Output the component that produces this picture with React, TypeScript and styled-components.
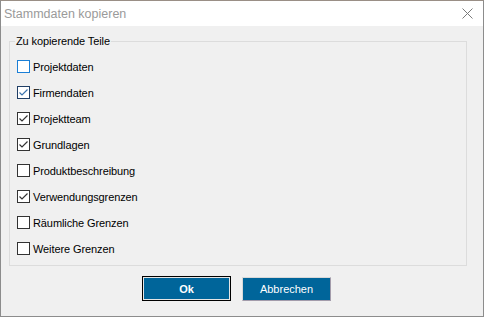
import styled, { createGlobalStyle } from "styled-components"

const GlobalStyle = createGlobalStyle`
  html, body {
    margin: 0;
    padding: 0;
    background: #f0f0f0;
  }
  body {
    font-family: "Liberation Sans", Arial, sans-serif;
  }
`

const Window = styled.div`
  width: 484px;
  height: 317px;
  box-sizing: border-box;
  display: flex;
  flex-direction: column;
  border: 1px solid #8c8c8c;
  border-top-color: #9a8f86;
  background: #f0f0f0;
`

const TitleBar = styled.div`
  height: 25px;
  display: flex;
  align-items: center;
  justify-content: space-between;
  padding: 0 10px 0 3px;
  background: #ffffff;
`

const Title = styled.span`
  font-size: 12.5px;
  color: #9a9a9a;
  margin-top: 1px;
`

const CloseIcon = () => (
  <svg width="11" height="11" viewBox="0 0 11 11" style={{ marginTop: -1 }}>
    <path d="M0.5 0.5L10.5 10.5M10.5 0.5L0.5 10.5" stroke="#7a7a7a" strokeWidth="1" fill="none" />
  </svg>
)

const Body = styled.div`
  flex: 1;
  display: flex;
  flex-direction: column;
  padding: 8px 16px 0 8px;
`

const Group = styled.fieldset`
  margin: 0;
  padding: 12px 7px 8px 7px;
  border: 1px solid #dcdcdc;
  height: 232px;
  box-sizing: border-box;
  min-width: 0;
`

const Legend = styled.legend`
  font-size: 11px;
  letter-spacing: -0.1px;
  color: #000;
  padding: 0 1px;
  margin-left: -2px;
  line-height: 14px;
`

const List = styled.div`
  display: flex;
  flex-direction: column;
  gap: 13px;
`

const Row = styled.label`
  display: flex;
  align-items: center;
  height: 13px;
  gap: 3px;
  font-size: 11px;
  letter-spacing: -0.1px;
  color: #000;
`

const Box = styled.span<{ $border: string }>`
  width: 13px;
  height: 13px;
  box-sizing: border-box;
  border: 1px solid ${(p) => p.$border};
  background: #fff;
  display: flex;
  align-items: center;
  justify-content: center;
`

const Check = ({ color }: { color: string }) => (
  <svg width="11" height="11" viewBox="0 0 11 11">
    <path d="M1.5 5.5L4 8L9.5 2.5" stroke={color} strokeWidth="1.2" fill="none" />
  </svg>
)

const Buttons = styled.div`
  display: flex;
  gap: 11px;
  padding: 10px 0 0 133px;
  align-items: flex-start;
`

const Button = styled.button<{ $primary?: boolean }>`
  font-family: "Liberation Sans", Arial, sans-serif;
  font-size: 11px;
  font-weight: ${(p) => (p.$primary ? 700 : 400)};
  color: #fff;
  background: #00659a;
  width: 89px;
  height: ${(p) => (p.$primary ? "25px" : "24px")};
  margin-top: ${(p) => (p.$primary ? "0" : "1px")};
  padding: 0;
  border: 1px solid ${(p) => (p.$primary ? "#000" : "#d8d8d8")};
  border-right-color: ${(p) => (p.$primary ? "#000" : "#a39cab")};
  border-bottom-color: ${(p) => (p.$primary ? "#000" : "#a39cab")};
  box-shadow: ${(p) => (p.$primary ? "inset 0 0 0 1px #e6e6e6" : "none")};
`

const items = [
  { label: "Projektdaten", checked: false, border: "#1a7fd6", check: "" },
  { label: "Firmendaten", checked: true, border: "#203f66", check: "#3b73ad" },
  { label: "Projektteam", checked: true, border: "#333", check: "#333" },
  { label: "Grundlagen", checked: true, border: "#333", check: "#333" },
  { label: "Produktbeschreibung", checked: false, border: "#333", check: "" },
  { label: "Verwendungsgrenzen", checked: true, border: "#333", check: "#333" },
  { label: "Räumliche Grenzen", checked: false, border: "#333", check: "" },
  { label: "Weitere Grenzen", checked: false, border: "#333", check: "" },
]

export default function App() {
  return (
    <>
      <GlobalStyle />
      <Window>
        <TitleBar>
          <Title>Stammdaten kopieren</Title>
          <CloseIcon />
        </TitleBar>
        <Body>
          <Group>
            <Legend>Zu kopierende Teile</Legend>
            <List>
              {items.map((it) => (
                <Row key={it.label}>
                  <Box $border={it.border}>{it.checked && <Check color={it.check} />}</Box>
                  {it.label}
                </Row>
              ))}
            </List>
          </Group>
          <Buttons>
            <Button $primary>Ok</Button>
            <Button>Abbrechen</Button>
          </Buttons>
        </Body>
      </Window>
    </>
  )
}
